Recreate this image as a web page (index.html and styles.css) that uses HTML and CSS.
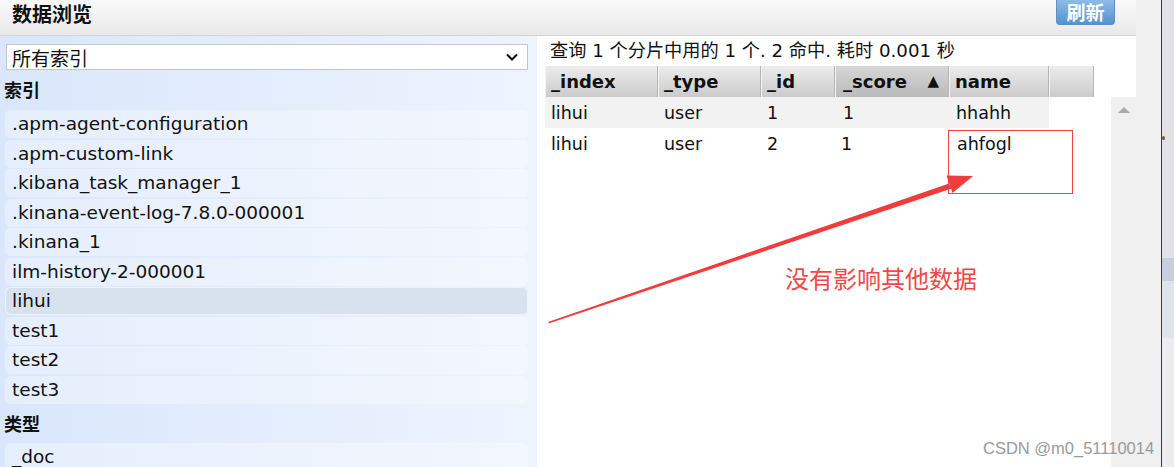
FILE: index.html
```html
<!DOCTYPE html>
<html lang="zh-CN">
<head>
  <meta charset="UTF-8">
  <title>数据浏览</title>
  <link rel="stylesheet" href="styles.css">
</head>
<body>
  <div class="window">
    <div class="app">
      <header class="topbar">
        <h1 class="title">数据浏览</h1>
        <button class="refresh">刷新</button>
      </header>
      <div class="browser">
        <aside class="sidebar">
          <div class="select">
            <span>所有索引</span>
            <svg width="12" height="8" viewBox="0 0 12 8"><path d="M1 1.5 L6 6.5 L11 1.5" fill="none" stroke="#111" stroke-width="2"/></svg>
          </div>
          <h2 class="group-title">索引</h2>
          <ul class="facet">
            <li>.apm-agent-configuration</li>
            <li>.apm-custom-link</li>
            <li>.kibana_task_manager_1</li>
            <li>.kinana-event-log-7.8.0-000001</li>
            <li>.kinana_1</li>
            <li>ilm-history-2-000001</li>
            <li class="active">lihui</li>
            <li>test1</li>
            <li>test2</li>
            <li>test3</li>
          </ul>
          <h2 class="group-title short">类型</h2>
          <ul class="facet">
            <li>_doc</li>
          </ul>
        </aside>
        <section class="results">
          <p class="summary">查询 1 个分片中用的 1 个. 2 命中. 耗时 0.001 秒</p>
          <div class="grid-head">
            <span>_index</span>
            <span>_type</span>
            <span>_id</span>
            <span class="sorted">_score <i>▲</i></span>
            <span>name</span>
            <span></span>
          </div>
          <div class="grid-body">
            <table class="rows">
              <tr class="odd"><td class="c-index">lihui</td><td class="c-type">user</td><td class="c-id">1</td><td class="c-score">1</td><td class="c-name">hhahh</td></tr>
              <tr><td>lihui</td><td>user</td><td>2</td><td>1</td><td>ahfogl</td></tr>
            </table>
            <div class="scrollbar"><span class="up"></span></div>
          </div>
        </section>
      </div>
    </div>
    <div class="gutter"></div>
    <div class="desk"><span class="dot"></span></div>
  </div>

  <!-- 标注 -->
  <div class="callout-box"></div>
  <svg class="arrow" width="1174" height="467" viewBox="0 0 1174 467">
    <polygon points="548,322 949,183.4 951.6,188.6 549.5,323.2" fill="#f03c3c"/>
    <polygon points="973,176 946.5,175.5 952.5,193" fill="#f03c3c"/>
  </svg>
  <div class="note">没有影响其他数据</div>
  <div class="watermark">CSDN @m0_51110014</div>
</body>
</html>
```

FILE: styles.css
```css
/* 基础 */
body {
  margin: 0;
  width: 1174px;
  height: 467px;
  overflow: hidden;
  font-family: "DejaVu Sans", "Noto Sans CJK SC", sans-serif;
  color: #111;
  background: #fff;
}
.window {
  display: flex;
  height: 467px;
}
.app {
  width: 1136px;
  display: flex;
  flex-direction: column;
}

/* 顶部栏 */
.topbar {
  height: 35px;
  border-bottom: 1px solid #d4d4d4;
  background: linear-gradient(#fafafa, #e8e8e8);
  display: flex;
  justify-content: space-between;
  align-items: flex-start;
  padding: 0 21px 0 12px;
}
.title {
  margin: 0;
  font-family: "Noto Sans CJK SC", sans-serif;
  font-size: 20px;
  font-weight: bold;
  line-height: 27px;
}
.refresh {
  width: 59px;
  height: 25px;
  padding: 0;
  border: 1px solid #5b8fc5;
  border-top: 0;
  border-radius: 0 0 4px 4px;
  background: linear-gradient(#8dbce6, #5592cf);
  color: #fff;
  font-family: "Noto Sans CJK SC", sans-serif;
  font-size: 19px;
  font-weight: bold;
  line-height: 22px;
}

.browser {
  flex: 1;
  display: flex;
  min-height: 0;
}

/* 左侧 */
.sidebar {
  width: 537px;
  box-sizing: border-box;
  padding: 8px 9px 0 5px;
  background: linear-gradient(90deg, #d9e6fb, #eef4fe);
  overflow: hidden;
}
.select {
  margin-left: 1px;
  height: 26px;
  box-sizing: border-box;
  border: 1px solid #c6c6c6;
  background: #fff;
  display: flex;
  align-items: center;
  justify-content: space-between;
  padding: 0 9px 0 5px;
  font-size: 19px;
}
.group-title {
  margin: 0 0 0 -1px;
  height: 39px;
  line-height: 39px;
  font-family: "Noto Sans CJK SC", sans-serif;
  font-size: 18px;
  font-weight: bold;
}
.group-title.short {
  height: 37px;
  line-height: 37px;
}
.facet {
  list-style: none;
  margin: 1px 0 0;
  padding: 0;
}
.facet li {
  height: 28px;
  line-height: 28px;
  padding-left: 7px;
  margin-bottom: 1.5px;
  border-radius: 5px;
  background: rgba(255, 255, 255, 0.32);
  font-size: 18.5px;
}
.facet li.active {
  background: #d8e2ef;
  box-shadow: inset 0 0 0 1px #eef3f9;
  border-radius: 6px;
}

/* 右侧结果 */
.results {
  flex: 1;
  display: flex;
  flex-direction: column;
  padding-left: 8px;
  background: #fff;
}
.summary {
  margin: 0;
  height: 30px;
  line-height: 30px;
  padding-left: 5px;
  font-size: 18.2px;
}
.grid-head {
  display: grid;
  grid-template-columns: 113px 103px 74px 114px 100px 45px;
  width: 549px;
  height: 31px;
}
.grid-head span {
  box-sizing: border-box;
  padding-left: 5px;
  border-left: 1px solid #f4f4f4;
  border-right: 1px solid #b6b6b6;
  background: linear-gradient(#ececec, #cbcbcb);
  font-size: 18px;
  font-weight: bold;
  line-height: 31px;
}
.grid-head .sorted {
  display: flex;
  justify-content: space-between;
  padding-left: 7px;
  padding-right: 9px;
  background: linear-gradient(#d6d6d6, #bababa);
}
.grid-head .sorted i {
  font-style: normal;
  font-size: 15px;
}
.grid-body {
  flex: 1;
  display: flex;
  justify-content: space-between;
}
.rows {
  border-collapse: collapse;
  width: 504px;
  height: 62px;
  font-size: 17.5px;
}
.rows td {
  height: 31px;
  padding: 0 0 0 6px;
}
.rows .c-index { width: 107px; }
.rows .c-type { width: 97px; }
.rows .c-id { width: 68px; }
.rows .c-score { width: 108px; padding-left: 8px; }
.rows .c-name { padding-left: 5px; }
.rows tr.odd {
  background: #f2f2f2;
}
.scrollbar {
  width: 25px;
  background: #f0f0f0;
}
.scrollbar .up {
  display: block;
  width: 0;
  margin: 10px auto 0;
  border-left: 6px solid transparent;
  border-right: 6px solid transparent;
  border-bottom: 6px solid #a9a9a9;
}

.gutter {
  width: 25px;
  background: #f0f0f0;
}
.desk {
  flex: 1;
  border-left: 1px solid #3a3a3a;
  background: linear-gradient(180deg, #e2e2e6 0, #e2e2e6 258px, #c6cfdd 258px, #c6cfdd 281px, #dfe3ea 281px, #dfe3ea 338px, #ececee 338px);
}
.desk .dot {
  display: block;
  width: 3px;
  height: 4px;
  margin-top: 136px;
  background: #7a5a40;
  border-radius: 2px;
}

/* 标注 */
.callout-box {
  position: absolute;
  left: 948px;
  top: 130px;
  width: 125px;
  height: 64px;
  box-sizing: border-box;
  border: 1px solid #f04242;
}
.arrow {
  position: absolute;
  left: 0;
  top: 0;
  pointer-events: none;
}
.note {
  position: absolute;
  left: 785px;
  top: 262px;
  font-family: "Noto Sans CJK SC", sans-serif;
  font-size: 24px;
  line-height: 32px;
  color: #f04848;
}
.watermark {
  position: absolute;
  left: 983px;
  top: 439px;
  font-family: "Liberation Sans", sans-serif;
  font-size: 16.5px;
  color: #9a9a9a;
}
```
